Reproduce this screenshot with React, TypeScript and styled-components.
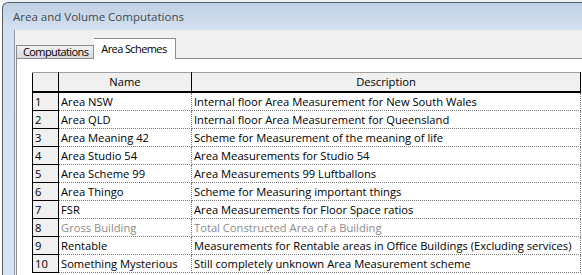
import React from 'react'
import styled, { createGlobalStyle } from 'styled-components'

const Global = createGlobalStyle`
  html, body {
    margin: 0;
    padding: 0;
    background: #ffffff;
  }
  body {
    width: 582px;
    height: 275px;
    overflow: hidden;
    font-family: "Open Sans", "Noto Sans", sans-serif;
  }
`

type Scheme = { id: string; name: string; desc: string; inactive?: boolean }

const schemes: Scheme[] = [
  { id: '1', name: 'Area NSW', desc: 'Internal floor Area Measurement for New South Wales' },
  { id: '2', name: 'Area QLD', desc: 'Internal floor Area Measurement for Queensland' },
  { id: '3', name: 'Area Meaning 42', desc: 'Scheme for Measurement of the meaning of life' },
  { id: '4', name: 'Area Studio 54', desc: 'Area Measurements for Studio 54' },
  { id: '5', name: 'Area Scheme 99', desc: 'Area Measurements 99 Luftballons' },
  { id: '6', name: 'Area Thingo', desc: 'Scheme for Measuring important things' },
  { id: '7', name: 'FSR', desc: 'Area Measurements for Floor Space ratios' },
  { id: '8', name: 'Gross Building', desc: 'Total Constructed Area of a Building', inactive: true },
  { id: '9', name: 'Rentable', desc: 'Measurements for Rentable areas in Office Buildings (Excluding services)' },
  { id: '10', name: 'Something Mysterious', desc: 'Still completely unknown Area Measurement scheme' },
]

const Screen = styled.div`
  height: 275px;
  display: flex;
  flex-direction: column;
  overflow: hidden;
`

const Backdrop = styled.div`
  height: 2px;
  flex: none;
  background: #eef1f4;
`

const Window = styled.div`
  flex: 1;
  margin-left: 2px;
  display: flex;
  flex-direction: column;
  border-top: 1px solid #56606c;
  border-left: 1px solid #56606c;
  border-top-left-radius: 6px;
  background: linear-gradient(180deg, #c0d1e5 0px, #d3e1ef 27px, #d7e4f1 100%);
  overflow: hidden;
`

const TitleBar = styled.div`
  height: 27px;
  flex: none;
  display: flex;
  align-items: center;
  padding-left: 10px;
  font-size: 11.5px;
  color: #43474c;
`

const Client = styled.div`
  flex: 1;
  margin-left: 11px;
  border-left: 1px solid #8e9aa8;
  background: #f0f0f0;
  padding: 8px 0 0 1px;
  display: flex;
  flex-direction: column;
`

const TabRow = styled.div`
  height: 20px;
  display: flex;
  align-items: flex-end;
`

const Tab = styled.div<{ $active?: boolean }>`
  box-sizing: border-box;
  border: 1px solid #898c95;
  border-bottom: none;
  font-size: 11px;
  letter-spacing: -0.6px;
  color: #000;
  white-space: nowrap;
  ${(p) =>
    p.$active
      ? `
    height: 21px;
    margin-bottom: -1px;
    padding: 0 8px 0 7px;
    line-height: 19px;
    background: #ffffff;
    position: relative;
    z-index: 1;
    border-left: none;
  `
      : `
    height: 13px;
    padding: 0 5px 0 6px;
    line-height: 12px;
    background: linear-gradient(180deg, #f2f2f2 0%, #e4e4e4 50%, #d9d9d9 100%);
  `}
`

const Panel = styled.div`
  flex: 1;
  background: #ffffff;
  border-top: 1px solid #898c95;
  border-left: 1px solid #898c95;
  padding: 13px 0 0 15px;
`

const Grid = styled.table`
  border-collapse: collapse;
  table-layout: fixed;
  width: 548px;
  font-size: 11.2px;
  color: #000;
`

const HeadCell = styled.th`
  height: 18px;
  padding: 0;
  font-weight: normal;
  text-align: center;
  background: #f0f0f0;
  border: 1px solid #000;
  border-top-color: #a0a0a0;
  border-bottom: 2px solid #000;
  line-height: 16px;
`

const RowHead = styled.td`
  height: 17px;
  padding: 0 0 0 2px;
  background: #f0f0f0;
  border: 1px solid #000;
  line-height: 16px;
  white-space: nowrap;
`

const Cell = styled.td<{ $muted?: boolean }>`
  height: 17px;
  padding: 0 0 0 2px;
  border: 1px dotted #7a7a7a;
  line-height: 16px;
  white-space: nowrap;
  overflow: hidden;
  color: ${(p) => (p.$muted ? '#8c8c8c' : '#000')};
`

export default function App() {
  return (
    <>
      <Global />
      <Screen>
        <Backdrop />
        <Window>
          <TitleBar>Area and Volume Computations</TitleBar>
          <Client>
            <TabRow>
              <Tab>Computations</Tab>
              <Tab $active>Area Schemes</Tab>
            </TabRow>
            <Panel>
              <Grid>
                <colgroup>
                  <col style={{ width: 26 }} />
                  <col style={{ width: 133 }} />
                  <col style={{ width: 389 }} />
                </colgroup>
                <thead>
                  <tr>
                    <HeadCell />
                    <HeadCell>Name</HeadCell>
                    <HeadCell>Description</HeadCell>
                  </tr>
                </thead>
                <tbody>
                  {schemes.map((s) => (
                    <tr key={s.id}>
                      <RowHead>{s.id}</RowHead>
                      <Cell $muted={s.inactive}>{s.name}</Cell>
                      <Cell $muted={s.inactive}>{s.desc}</Cell>
                    </tr>
                  ))}
                </tbody>
              </Grid>
            </Panel>
          </Client>
        </Window>
      </Screen>
    </>
  )
}
